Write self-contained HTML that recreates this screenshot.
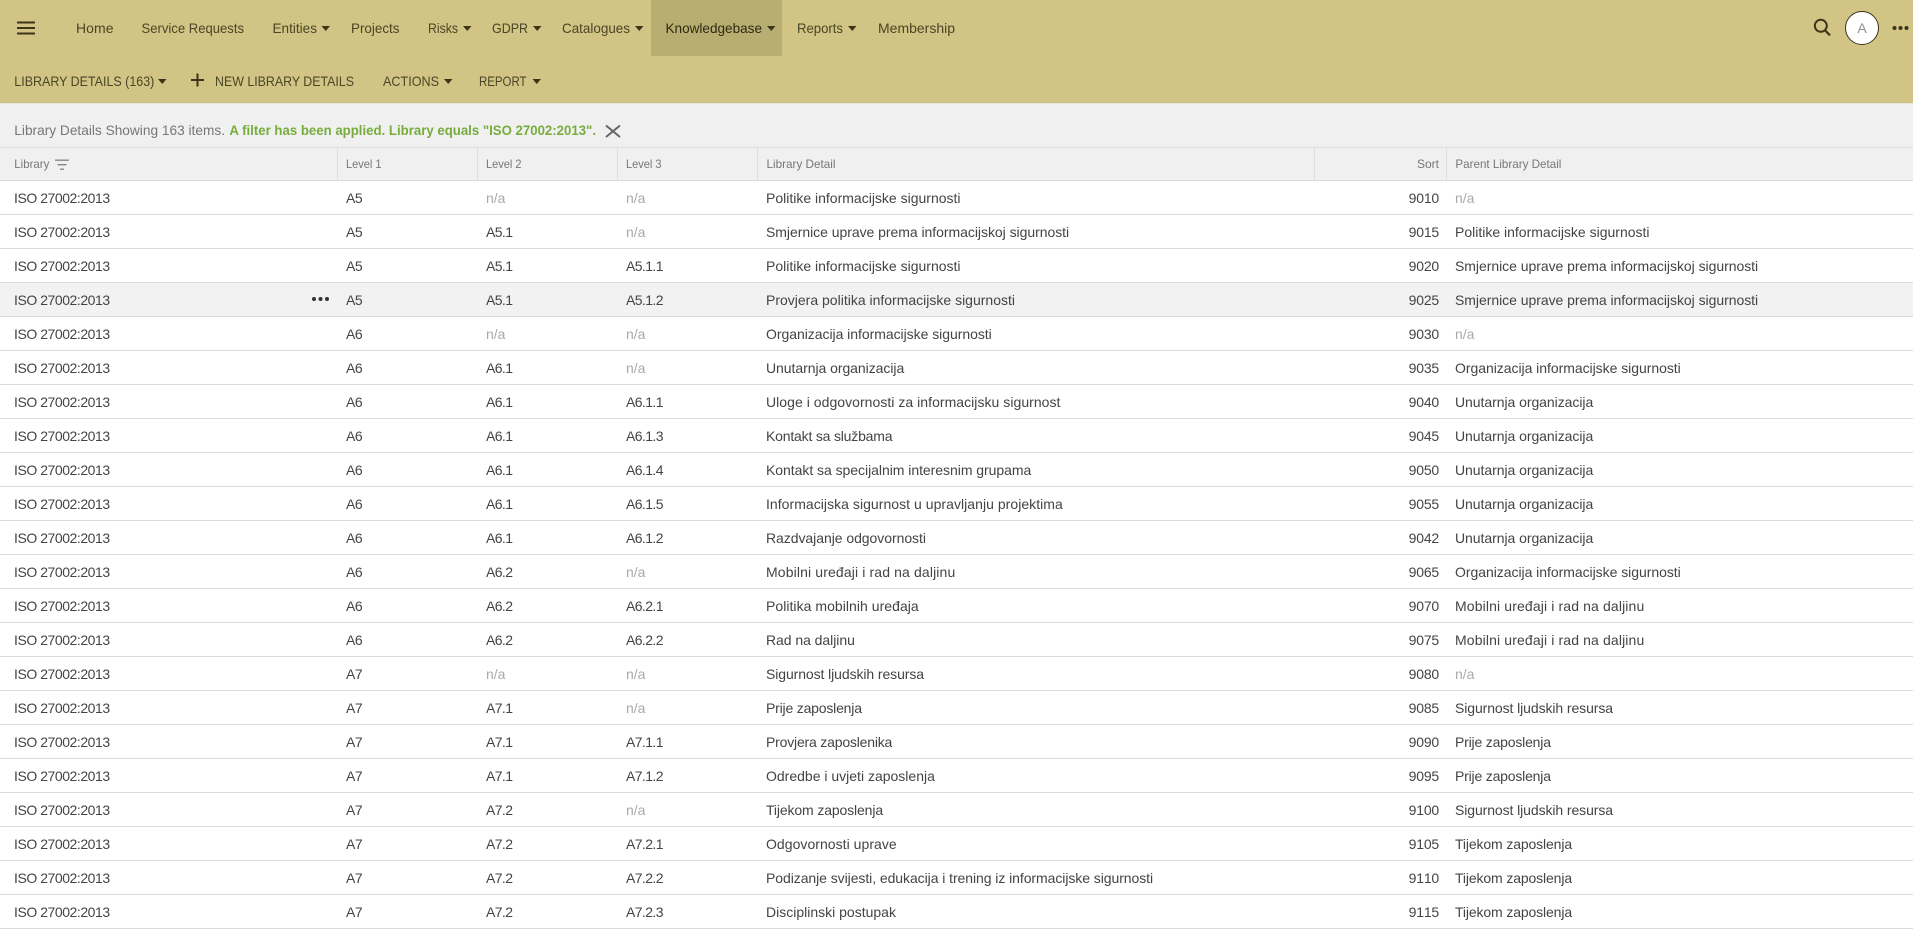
<!DOCTYPE html>
<html lang="hr">
<head>
<meta charset="utf-8">
<title>Library Details</title>
<style>
html,body{margin:0;padding:0;background:#fff}
body{width:1913px;height:929px;overflow:hidden;position:relative;font-family:"Liberation Sans",sans-serif;font-size:14px;color:#444}
#top{position:absolute;left:0;top:0;width:1913px;height:103px;background:#d1c484}
#fb{position:absolute;left:0;top:103px;width:1913px;height:78px;background:#f0f0f0;border-top:1px solid #e4e4e0;box-sizing:border-box}
#ov{position:absolute;left:0;top:0;width:1913px;height:182px;font-family:"Liberation Sans",sans-serif}
.r{position:absolute;left:0;width:1913px;height:34px;box-sizing:border-box;border-bottom:1px solid #dcdcdc;line-height:35px;background:#fff}
.r.h{background:#f2f2f2}
.r span{position:absolute;top:0;white-space:nowrap}
.a{left:14px;letter-spacing:-.45px}
.b{left:346px;letter-spacing:-.5px}
.c{left:486px;letter-spacing:-.6px}
.d{left:626px;letter-spacing:-.6px}
.e{left:766px}
.f{right:474px;letter-spacing:-.2px;font-kerning:none}
.g{left:1455px}
.n{color:#aaa;letter-spacing:0!important}
.m{letter-spacing:.13px}
.s{letter-spacing:-.09px}
.p{letter-spacing:-.19px}
.t{letter-spacing:-.13px}
.u{letter-spacing:-.05px}
.v{letter-spacing:.04px}
.w{letter-spacing:-.04px}
.x{letter-spacing:-.065px}
</style>
</head>
<body>
<div id="top"></div>
<div id="fb"></div>
<svg id="ov" width="1913" height="182" viewBox="0 0 1913 182">
<rect x="651" y="0" width="131" height="56" fill="#b9ae72"/>
<g fill="#3d3519"><rect x="17" y="21.5" width="18" height="2"/><rect x="17" y="27" width="18" height="2"/><rect x="17" y="32.5" width="18" height="2"/></g>
<g font-size="14" fill="#4a4626">
<text x="76" y="33" textLength="37.5">Home</text>
<text x="141.5" y="33" textLength="102.5" lengthAdjust="spacingAndGlyphs">Service Requests</text>
<text x="272.5" y="33" textLength="44.5" lengthAdjust="spacingAndGlyphs">Entities</text>
<text x="351" y="33" textLength="48.5" lengthAdjust="spacingAndGlyphs">Projects</text>
<text x="428" y="33" textLength="30" lengthAdjust="spacingAndGlyphs">Risks</text>
<text x="492" y="33" textLength="36" lengthAdjust="spacingAndGlyphs">GDPR</text>
<text x="562" y="33" textLength="68" lengthAdjust="spacingAndGlyphs">Catalogues</text>
<text x="665.5" y="33" textLength="96.5" lengthAdjust="spacingAndGlyphs" fill="#2e2a12">Knowledgebase</text>
<text x="797" y="33" textLength="46" lengthAdjust="spacingAndGlyphs">Reports</text>
<text x="878" y="33" textLength="77" lengthAdjust="spacingAndGlyphs">Membership</text>
<text x="14.3" y="86" textLength="140" lengthAdjust="spacingAndGlyphs">LIBRARY DETAILS (163)</text>
<text x="215" y="86" textLength="139" lengthAdjust="spacingAndGlyphs">NEW LIBRARY DETAILS</text>
<text x="383" y="86" textLength="56" lengthAdjust="spacingAndGlyphs">ACTIONS</text>
<text x="479" y="86" textLength="47.5" lengthAdjust="spacingAndGlyphs">REPORT</text>
</g>
<g fill="#3d3519">
<polygon points="321.5,26 330,26 325.75,31"/>
<polygon points="463,26 471.5,26 467.25,31"/>
<polygon points="533,26 541.5,26 537.25,31"/>
<polygon points="635,26 643.5,26 639.25,31"/>
<polygon points="767,26 775.5,26 771.25,31"/>
<polygon points="848,26 856.5,26 852.25,31"/>
<polygon points="158,79 166.5,79 162.25,84"/>
<polygon points="444,79 452.5,79 448.25,84"/>
<polygon points="532.5,79 541,79 536.75,84"/>
<rect x="191" y="79" width="13" height="2"/><rect x="196.5" y="73.5" width="2" height="13"/>
<circle cx="1894.5" cy="28" r="2"/><circle cx="1900.5" cy="28" r="2"/><circle cx="1906.5" cy="28" r="2"/>
</g>
<circle cx="1820.8" cy="25.8" r="6" fill="none" stroke="#3d3519" stroke-width="2"/>
<path d="M1825 30.2L1830 35.4" stroke="#3d3519" stroke-width="2.2" fill="none"/>
<circle cx="1862" cy="28" r="16.5" fill="#fff" stroke="#3d3519" stroke-width="1"/>
<text x="1862" y="33" text-anchor="middle" font-size="14" fill="#8a8f96">A</text>
<text x="14.3" y="135" font-size="14" fill="#777" textLength="210.7" lengthAdjust="spacingAndGlyphs">Library Details Showing 163 items.</text>
<text x="229.4" y="135" font-size="14" font-weight="bold" fill="#76ad3c" textLength="366.6" lengthAdjust="spacingAndGlyphs">A filter has been applied. Library equals "ISO 27002:2013".</text>
<path d="M606 125.5L620 137M620 125.5L606 137" stroke="#666" stroke-width="2" fill="none"/>
<rect x="0" y="147" width="1913" height="1" fill="#dedede"/>
<rect x="0" y="180" width="1913" height="2" fill="#dcdcdc"/>
<g fill="#dedede"><rect x="337" y="148" width="1" height="32"/><rect x="477" y="148" width="1" height="32"/><rect x="617" y="148" width="1" height="32"/><rect x="757" y="148" width="1" height="32"/><rect x="1314" y="148" width="1" height="32"/><rect x="1446" y="148" width="1" height="32"/></g>
<g font-size="12" fill="#777">
<text x="14.3" y="168" textLength="35" lengthAdjust="spacingAndGlyphs">Library</text>
<text x="346" y="168" textLength="35.5" lengthAdjust="spacingAndGlyphs">Level 1</text>
<text x="486" y="168" textLength="35.5" lengthAdjust="spacingAndGlyphs">Level 2</text>
<text x="626" y="168" textLength="35.5" lengthAdjust="spacingAndGlyphs">Level 3</text>
<text x="766.5" y="168" textLength="69" lengthAdjust="spacingAndGlyphs">Library Detail</text>
<text x="1417" y="168" textLength="22" lengthAdjust="spacingAndGlyphs">Sort</text>
<text x="1455.4" y="168" textLength="106" lengthAdjust="spacingAndGlyphs">Parent Library Detail</text>
</g>
<g fill="#888"><rect x="55" y="159.5" width="14" height="1.4"/><rect x="57.5" y="164" width="9" height="1.4"/><rect x="60" y="168.5" width="4" height="1.4"/></g>
</svg>
<div id="rows">
<div class="r" style="top:181px"><span class="a">ISO 27002:2013</span><span class="b">A5</span><span class="c n">n/a</span><span class="d n">n/a</span><span class="e">Politike informacijske sigurnosti</span><span class="f">9010</span><span class="g n">n/a</span></div>
<div class="r" style="top:215px"><span class="a">ISO 27002:2013</span><span class="b">A5</span><span class="c">A5.1</span><span class="d n">n/a</span><span class="e w">Smjernice uprave prema informacijskoj sigurnosti</span><span class="f">9015</span><span class="g">Politike informacijske sigurnosti</span></div>
<div class="r" style="top:249px"><span class="a">ISO 27002:2013</span><span class="b">A5</span><span class="c">A5.1</span><span class="d">A5.1.1</span><span class="e">Politike informacijske sigurnosti</span><span class="f">9020</span><span class="g w">Smjernice uprave prema informacijskoj sigurnosti</span></div>
<div class="r h" style="top:283px"><span class="a">ISO 27002:2013</span><span class="b">A5</span><span class="c">A5.1</span><span class="d">A5.1.2</span><span class="e">Provjera politika informacijske sigurnosti</span><span class="f">9025</span><span class="g w">Smjernice uprave prema informacijskoj sigurnosti</span><svg width="18" height="6" style="position:absolute;left:312px;top:13px"><g fill="#333"><circle cx="2" cy="3" r="2"/><circle cx="8.5" cy="3" r="2"/><circle cx="15" cy="3" r="2"/></g></svg></div>
<div class="r" style="top:317px"><span class="a">ISO 27002:2013</span><span class="b">A6</span><span class="c n">n/a</span><span class="d n">n/a</span><span class="e w">Organizacija informacijske sigurnosti</span><span class="f">9030</span><span class="g n">n/a</span></div>
<div class="r" style="top:351px"><span class="a">ISO 27002:2013</span><span class="b">A6</span><span class="c">A6.1</span><span class="d n">n/a</span><span class="e u">Unutarnja organizacija</span><span class="f">9035</span><span class="g w">Organizacija informacijske sigurnosti</span></div>
<div class="r" style="top:385px"><span class="a">ISO 27002:2013</span><span class="b">A6</span><span class="c">A6.1</span><span class="d">A6.1.1</span><span class="e v">Uloge i odgovornosti za informacijsku sigurnost</span><span class="f">9040</span><span class="g u">Unutarnja organizacija</span></div>
<div class="r" style="top:419px"><span class="a">ISO 27002:2013</span><span class="b">A6</span><span class="c">A6.1</span><span class="d">A6.1.3</span><span class="e p">Kontakt sa službama</span><span class="f">9045</span><span class="g u">Unutarnja organizacija</span></div>
<div class="r" style="top:453px"><span class="a">ISO 27002:2013</span><span class="b">A6</span><span class="c">A6.1</span><span class="d">A6.1.4</span><span class="e w">Kontakt sa specijalnim interesnim grupama</span><span class="f">9050</span><span class="g u">Unutarnja organizacija</span></div>
<div class="r" style="top:487px"><span class="a">ISO 27002:2013</span><span class="b">A6</span><span class="c">A6.1</span><span class="d">A6.1.5</span><span class="e v">Informacijska sigurnost u upravljanju projektima</span><span class="f">9055</span><span class="g u">Unutarnja organizacija</span></div>
<div class="r" style="top:521px"><span class="a">ISO 27002:2013</span><span class="b">A6</span><span class="c">A6.1</span><span class="d">A6.1.2</span><span class="e u">Razdvajanje odgovornosti</span><span class="f">9042</span><span class="g u">Unutarnja organizacija</span></div>
<div class="r" style="top:555px"><span class="a">ISO 27002:2013</span><span class="b">A6</span><span class="c">A6.2</span><span class="d n">n/a</span><span class="e m">Mobilni uređaji i rad na daljinu</span><span class="f">9065</span><span class="g w">Organizacija informacijske sigurnosti</span></div>
<div class="r" style="top:589px"><span class="a">ISO 27002:2013</span><span class="b">A6</span><span class="c">A6.2</span><span class="d">A6.2.1</span><span class="e v">Politika mobilnih uređaja</span><span class="f">9070</span><span class="g m">Mobilni uređaji i rad na daljinu</span></div>
<div class="r" style="top:623px"><span class="a">ISO 27002:2013</span><span class="b">A6</span><span class="c">A6.2</span><span class="d">A6.2.2</span><span class="e u">Rad na daljinu</span><span class="f">9075</span><span class="g m">Mobilni uređaji i rad na daljinu</span></div>
<div class="r" style="top:657px"><span class="a">ISO 27002:2013</span><span class="b">A7</span><span class="c n">n/a</span><span class="d n">n/a</span><span class="e s">Sigurnost ljudskih resursa</span><span class="f">9080</span><span class="g n">n/a</span></div>
<div class="r" style="top:691px"><span class="a">ISO 27002:2013</span><span class="b">A7</span><span class="c">A7.1</span><span class="d n">n/a</span><span class="e p">Prije zaposlenja</span><span class="f">9085</span><span class="g s">Sigurnost ljudskih resursa</span></div>
<div class="r" style="top:725px"><span class="a">ISO 27002:2013</span><span class="b">A7</span><span class="c">A7.1</span><span class="d">A7.1.1</span><span class="e p">Provjera zaposlenika</span><span class="f">9090</span><span class="g p">Prije zaposlenja</span></div>
<div class="r" style="top:759px"><span class="a">ISO 27002:2013</span><span class="b">A7</span><span class="c">A7.1</span><span class="d">A7.1.2</span><span class="e">Odredbe i uvjeti zaposlenja</span><span class="f">9095</span><span class="g p">Prije zaposlenja</span></div>
<div class="r" style="top:793px"><span class="a">ISO 27002:2013</span><span class="b">A7</span><span class="c">A7.2</span><span class="d n">n/a</span><span class="e t">Tijekom zaposlenja</span><span class="f">9100</span><span class="g s">Sigurnost ljudskih resursa</span></div>
<div class="r" style="top:827px"><span class="a">ISO 27002:2013</span><span class="b">A7</span><span class="c">A7.2</span><span class="d">A7.2.1</span><span class="e v">Odgovornosti uprave</span><span class="f">9105</span><span class="g t">Tijekom zaposlenja</span></div>
<div class="r" style="top:861px"><span class="a">ISO 27002:2013</span><span class="b">A7</span><span class="c">A7.2</span><span class="d">A7.2.2</span><span class="e x">Podizanje svijesti, edukacija i trening iz informacijske sigurnosti</span><span class="f">9110</span><span class="g t">Tijekom zaposlenja</span></div>
<div class="r" style="top:895px"><span class="a">ISO 27002:2013</span><span class="b">A7</span><span class="c">A7.2</span><span class="d">A7.2.3</span><span class="e">Disciplinski postupak</span><span class="f">9115</span><span class="g t">Tijekom zaposlenja</span></div>
</div>
</body>
</html>
